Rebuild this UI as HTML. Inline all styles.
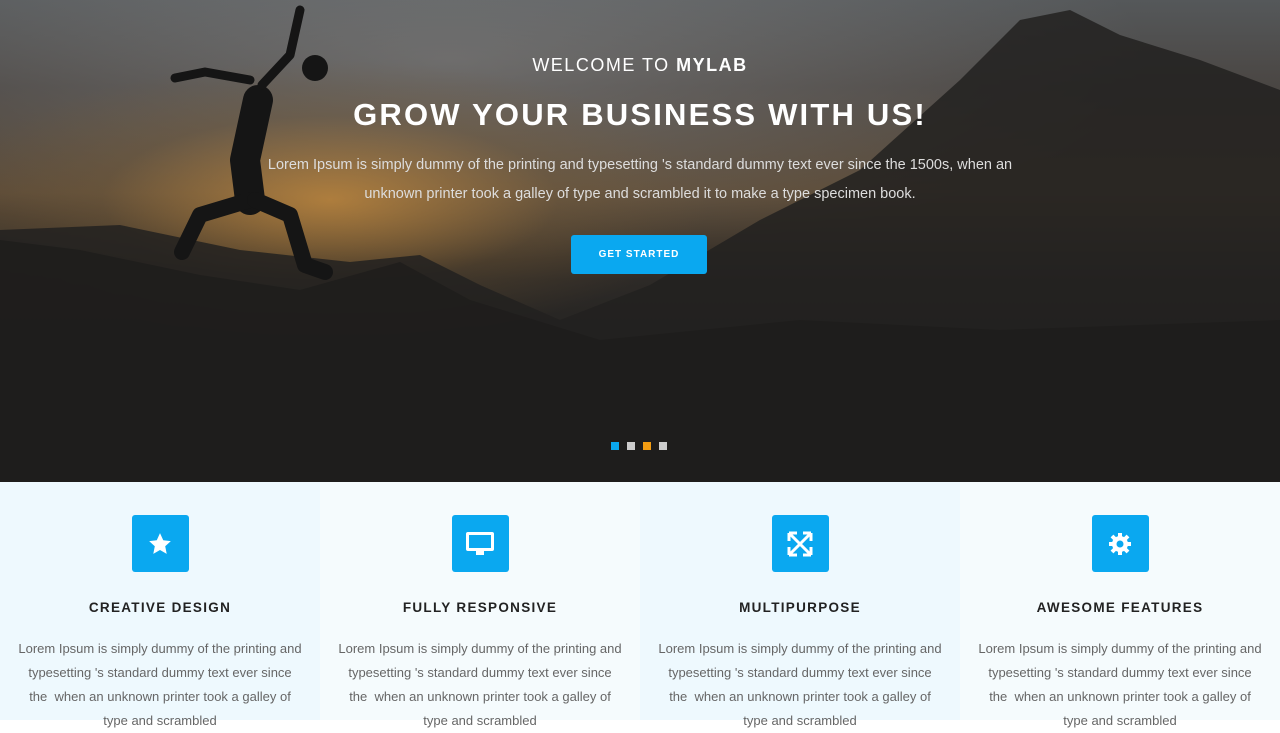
<!DOCTYPE html>
<html><head><meta charset="utf-8"><style>
*{margin:0;padding:0;box-sizing:border-box}
body{width:1280px;height:720px;overflow:hidden;font-family:"Liberation Sans",sans-serif}
.hero{position:relative;height:482px;background:
radial-gradient(ellipse 380px 140px at 330px 200px,rgba(200,140,60,.75),rgba(120,90,50,.3) 60%,rgba(0,0,0,0) 100%),
radial-gradient(ellipse 700px 200px at 450px 60px,rgba(150,150,150,.45),rgba(0,0,0,0) 100%),
linear-gradient(180deg,#55585a 0%,#4a4643 18%,#5b4a36 40%,#2d2a27 58%,#222120 75%,#202020 100%);overflow:hidden}
.mtn{position:absolute;left:0;top:0}
.hero .c{position:absolute;left:0;right:0;text-align:center;color:#fff}
.btn{position:absolute;left:571px;top:235px;width:136px;height:39px;background:#0aa8f0;border-radius:3px;color:#fff;font-size:10px;font-weight:bold;letter-spacing:1px;text-align:center;line-height:39px}
.dots{position:absolute;top:442px;left:611px;display:flex;gap:8px}
.dots span{width:8px;height:8px;background:#ccc}
.feat{display:flex;height:238px}
.col{width:320px;text-align:center;padding-top:33px}
.col:nth-child(odd){background:#eef9fe}.col:nth-child(even){background:#f5fbfd}
.ic{width:57px;height:57px;background:#0aa8f0;border-radius:3px;margin:0 auto;display:flex;align-items:center;justify-content:center}
h3{font-size:13.5px;letter-spacing:1.3px;color:#222;margin-top:28px;font-weight:bold}
p{font-size:13px;color:#666;line-height:24px;margin-top:22px;white-space:nowrap}
</style></head><body>
<div class="hero">
<svg class="mtn" width="1280" height="482">
<path d="M0 230 L120 225 L240 250 L350 262 L420 255 L480 285 L560 320 L650 285 L760 220 L860 170 L960 80 L1020 20 L1070 10 L1120 35 L1200 60 L1280 90 L1280 482 L0 482Z" fill="#222120" opacity=".85"/>
<path d="M0 240 L80 250 L200 275 L300 290 L400 262 L470 300 L600 340 L800 320 L1000 330 L1280 320 L1280 482 L0 482Z" fill="#1e1d1c" opacity=".8"/>
<g stroke="#151515" stroke-linecap="round" stroke-linejoin="round" fill="none">
<path d="M258 100 L245 160 L250 200" stroke-width="30"/>
<path d="M250 200 L200 215 L182 252" stroke-width="16"/>
<path d="M255 200 L290 215 L305 265 L325 272" stroke-width="16"/>
<path d="M262 85 L290 55 L300 10" stroke-width="9"/>
<path d="M250 80 L205 72 L175 78" stroke-width="9"/>
</g>
<circle cx="315" cy="68" r="13" fill="#151515"/>
</svg>
<div class="c" style="top:55px;font-size:18px;letter-spacing:1.5px">WELCOME TO <b>MYLAB</b></div>
<div class="c" style="top:97px;font-size:31px;font-weight:bold;letter-spacing:2.2px">GROW YOUR BUSINESS WITH US!</div>
<div class="c" style="top:151px;font-size:14.5px;line-height:29px;color:#ddd">Lorem Ipsum is simply dummy of the printing and typesetting 's standard dummy text ever since the 1500s, when an<br>unknown printer took a galley of type and scrambled it to make a type specimen book.</div>
<div class="btn">GET STARTED</div>
<div class="dots"><span style="background:#0aa8f0"></span><span></span><span style="background:#f39c12"></span><span></span></div>
</div>
<div class="feat">
<div class="col"><div class="ic"><svg width="26" height="26" viewBox="0 0 24 24"><path d="M12 2l3 6.5 7 .8-5.2 4.8 1.4 7-6.2-3.6-6.2 3.6 1.4-7L2 9.3l7-.8z" fill="#fff"/></svg></div><h3>CREATIVE DESIGN</h3><p>Lorem Ipsum is simply dummy of the printing and<br>typesetting 's standard dummy text ever since<br>the&nbsp; when an unknown printer took a galley of<br>type and scrambled</p></div>
<div class="col"><div class="ic"><svg width="30" height="28" viewBox="0 0 30 28"><rect x="1" y="2" width="28" height="19" rx="2" fill="#fff"/><rect x="4" y="5" width="22" height="13" fill="#0aa8f0"/><rect x="11" y="21" width="8" height="4" fill="#fff"/></svg></div><h3>FULLY RESPONSIVE</h3><p>Lorem Ipsum is simply dummy of the printing and<br>typesetting 's standard dummy text ever since<br>the&nbsp; when an unknown printer took a galley of<br>type and scrambled</p></div>
<div class="col"><div class="ic"><svg width="28" height="28" viewBox="0 0 28 28" stroke="#fff" stroke-width="3" fill="none"><path d="M4 4l20 20M24 4L4 24"/><path d="M3 3h8M3 3v8M25 3h-8M25 3v8M3 25h8M3 25v-8M25 25h-8M25 25v-8"/></svg></div><h3>MULTIPURPOSE</h3><p>Lorem Ipsum is simply dummy of the printing and<br>typesetting 's standard dummy text ever since<br>the&nbsp; when an unknown printer took a galley of<br>type and scrambled</p></div>
<div class="col"><div class="ic"><svg width="26" height="26" viewBox="0 0 26 26"><g fill="#fff"><circle cx="13" cy="13" r="8"/><g stroke="#fff" stroke-width="4"><path d="M13 2v22M2 13h22M5 5l16 16M21 5L5 21"/></g></g><circle cx="13" cy="13" r="3.5" fill="#0aa8f0"/></svg></div><h3>AWESOME FEATURES</h3><p>Lorem Ipsum is simply dummy of the printing and<br>typesetting 's standard dummy text ever since<br>the&nbsp; when an unknown printer took a galley of<br>type and scrambled</p></div>
</div>
</body></html>
